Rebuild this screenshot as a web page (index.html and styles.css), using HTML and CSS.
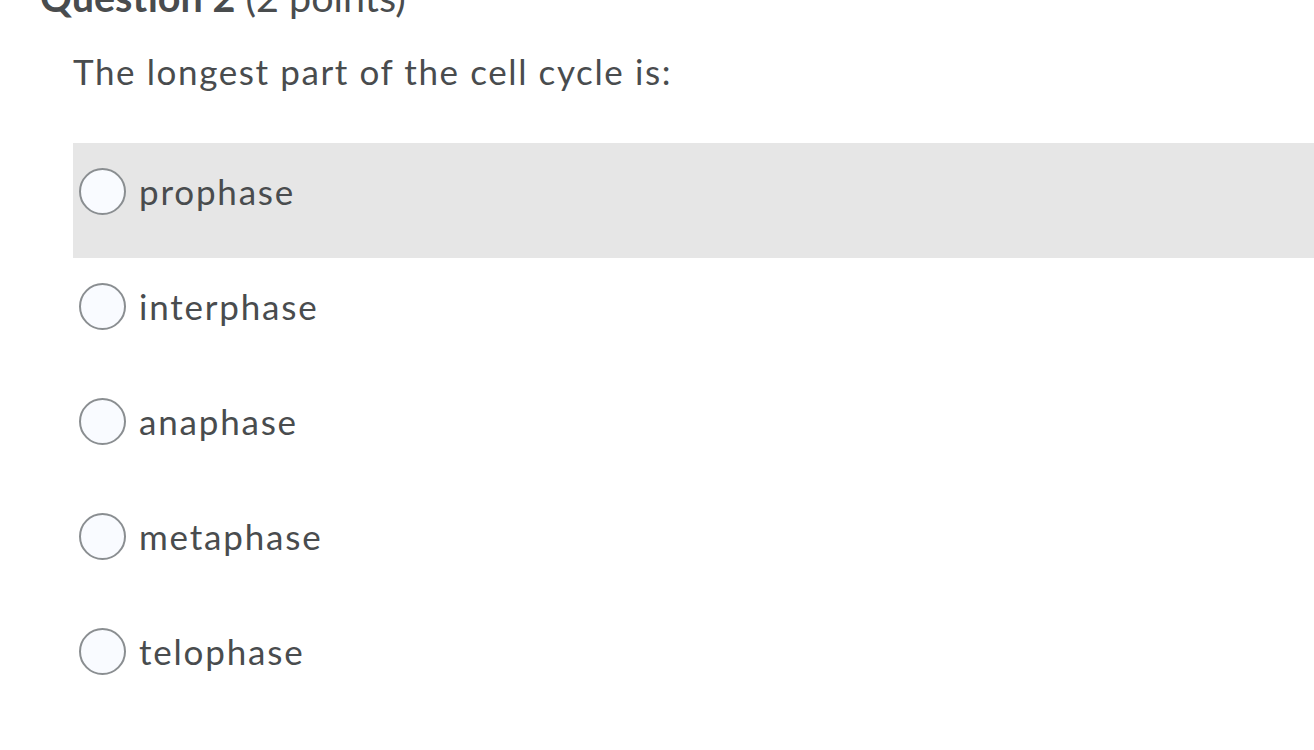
FILE: index.html
```html
<!DOCTYPE html>
<html lang="en">
<head>
<meta charset="utf-8">
<title>Question 2</title>
<link rel="stylesheet" href="styles.css">
</head>
<body>
<div class="page">
  <h2 class="q-title"><strong>Question 2</strong> <span class="pts">(2 points)</span></h2>
  <div class="q-body">
    <p class="q-text">The longest part of the cell cycle is:</p>
    <div class="options">
      <label class="opt opt-hover"><span class="radio"></span><span class="opt-text">prophase</span></label>
      <label class="opt"><span class="radio"></span><span class="opt-text">interphase</span></label>
      <label class="opt"><span class="radio"></span><span class="opt-text">anaphase</span></label>
      <label class="opt"><span class="radio"></span><span class="opt-text">metaphase</span></label>
      <label class="opt"><span class="radio"></span><span class="opt-text">telophase</span></label>
    </div>
  </div>
</div>
</body>
</html>
```

FILE: styles.css
```css
html, body {
  margin: 0;
  padding: 0;
  background: #ffffff;
  overflow: hidden;
}
body {
  font-family: Lato, "Open Sans", "Liberation Sans", sans-serif;
  color: #494c4e;
}
.page {
  width: 1314px;
  height: 750px;
}
.q-title {
  margin: -27px 0 0 40px;
  font-size: 39.5px;
  line-height: 48px;
  font-weight: 400;
  white-space: nowrap;
}
.q-title strong {
  font-weight: 700;
}
.q-body {
  margin-left: 73px;
}
.q-text {
  margin: 29px 0 0 0;
  font-size: 35px;
  line-height: 42px;
  letter-spacing: 1.6px;
}
.options {
  margin-top: 51px;
  display: flex;
  flex-direction: column;
}
.opt {
  height: 115px;
  display: flex;
  align-items: flex-start;
  padding-left: 6px;
  box-sizing: border-box;
}
.opt-hover {
  background: #e6e6e6;
}
.radio {
  width: 43px;
  height: 43px;
  margin-top: 25px;
  border: 2px solid #8a8e91;
  border-radius: 50%;
  background: #f9fbff;
  flex: none;
}
.opt-text {
  margin-left: 13px;
  margin-top: 27px;
  font-size: 35px;
  line-height: 42px;
  letter-spacing: 1.8px;
}
```
